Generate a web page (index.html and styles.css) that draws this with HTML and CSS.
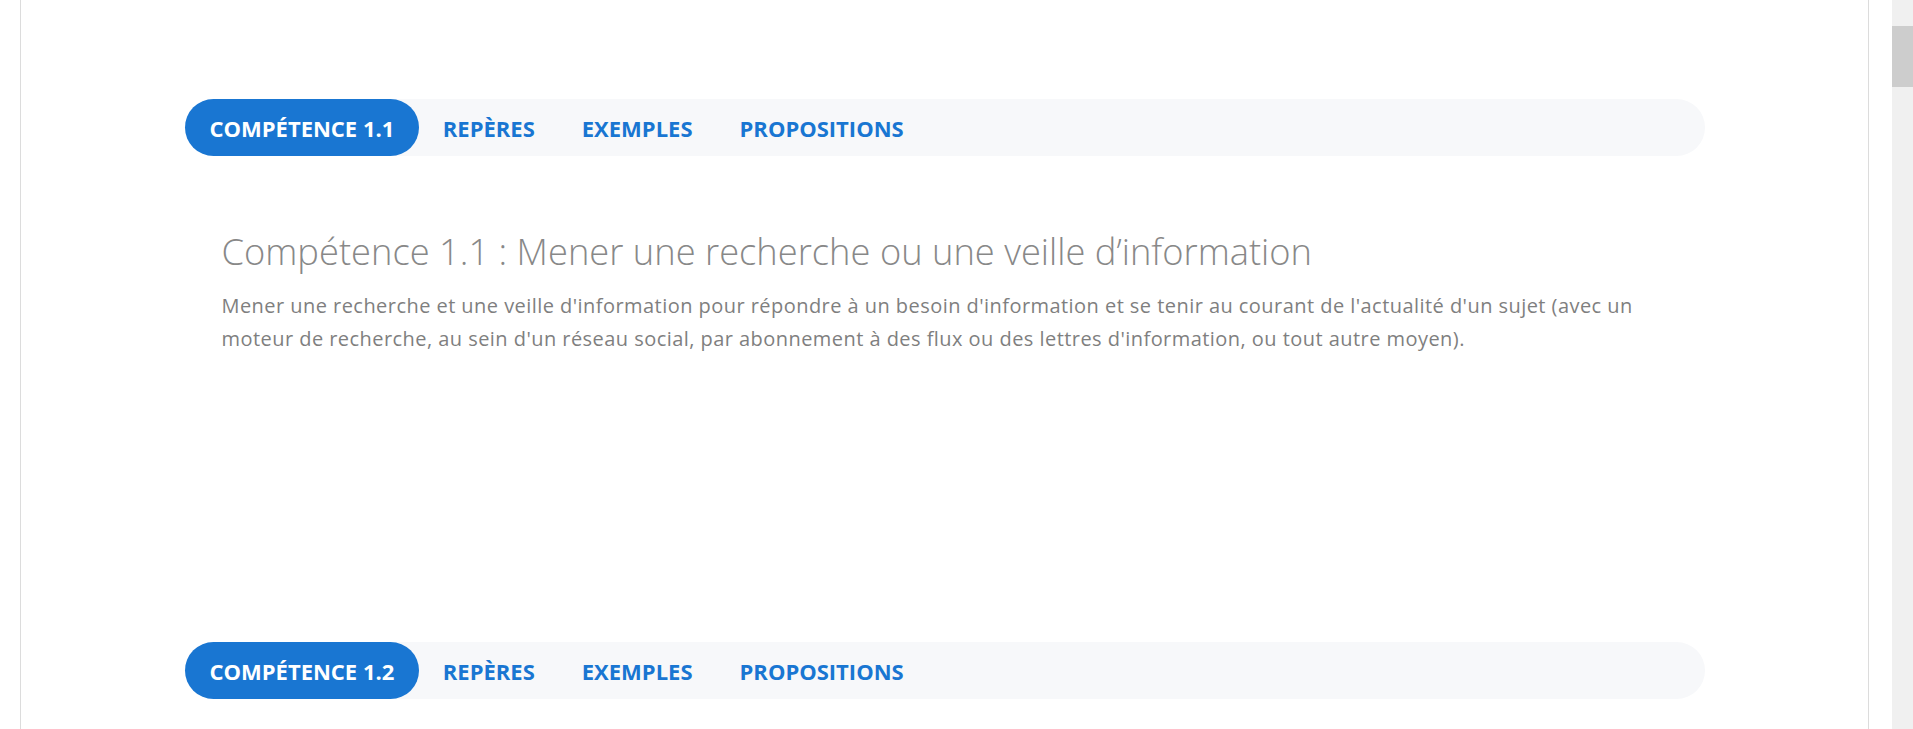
FILE: index.html
```html
<!DOCTYPE html>
<html lang="fr">
<head>
<meta charset="utf-8">
<title>Compétences</title>
<link rel="stylesheet" href="styles.css">
</head>
<body>
<div class="page">
  <main class="frame">
    <section class="competence">
      <nav class="tabs">
        <span class="tab active">COMPÉTENCE 1.1</span>
        <span class="tab">REPÈRES</span>
        <span class="tab">EXEMPLES</span>
        <span class="tab">PROPOSITIONS</span>
      </nav>
      <div class="content">
        <h2 class="title">Compétence 1.1 : Mener une recherche ou une veille d’information</h2>
        <p class="desc">Mener une recherche et une veille d'information pour répondre à un besoin d'information et se tenir au courant de l'actualité d'un sujet (avec un moteur de recherche, au sein d'un réseau social, par abonnement à des flux ou des lettres d'information, ou tout autre moyen).</p>
      </div>
    </section>
    <section class="competence">
      <nav class="tabs">
        <span class="tab active">COMPÉTENCE 1.2</span>
        <span class="tab">REPÈRES</span>
        <span class="tab">EXEMPLES</span>
        <span class="tab">PROPOSITIONS</span>
      </nav>
    </section>
  </main>
  <div class="scrollbar"><div class="thumb"></div></div>
</div>
</body>
</html>
```
FILE: styles.css
```css
html, body {
  margin: 0;
  padding: 0;
  height: 100%;
  overflow: hidden;
  background: #ffffff;
}
body {
  font-family: "Open Sans", "Noto Sans", sans-serif;
}
.page {
  display: flex;
  height: 100vh;
}
.frame {
  flex: 1;
  margin: 0 23px 0 20px;
  border-left: 1px solid #dcdcdc;
  border-right: 1px solid #dcdcdc;
  display: flex;
  flex-direction: column;
  align-items: center;
  padding-top: 99px;
}
.competence {
  width: 1520px;
  height: 543px;
  flex-shrink: 0;
}
.tabs {
  display: flex;
  align-items: stretch;
  height: 57px;
  background: #f7f8fa;
  border-radius: 29px;
}
.tab {
  display: flex;
  align-items: center;
  padding: 0 23.5px;
  font-weight: 700;
  font-size: 22px;
  color: #1976d2;
  border-radius: 29px;
}
.tab.active {
  padding: 0 25px;
  background: #1976d2;
  color: #ffffff;
}
.content {
  padding: 74px 37px 0;
}
.title {
  margin: 0;
  font-weight: 300;
  font-size: 36.3px;
  line-height: 43px;
  color: #888888;
}
.desc {
  margin: 16px 0 0;
  font-size: 20px;
  letter-spacing: 0.45px;
  line-height: 33px;
  color: #7f7f7f;
}
.scrollbar {
  width: 21px;
  background: #f0f0f0;
  flex-shrink: 0;
  padding-top: 26px;
}
.thumb {
  height: 61px;
  background: #cdcdcd;
}
```
